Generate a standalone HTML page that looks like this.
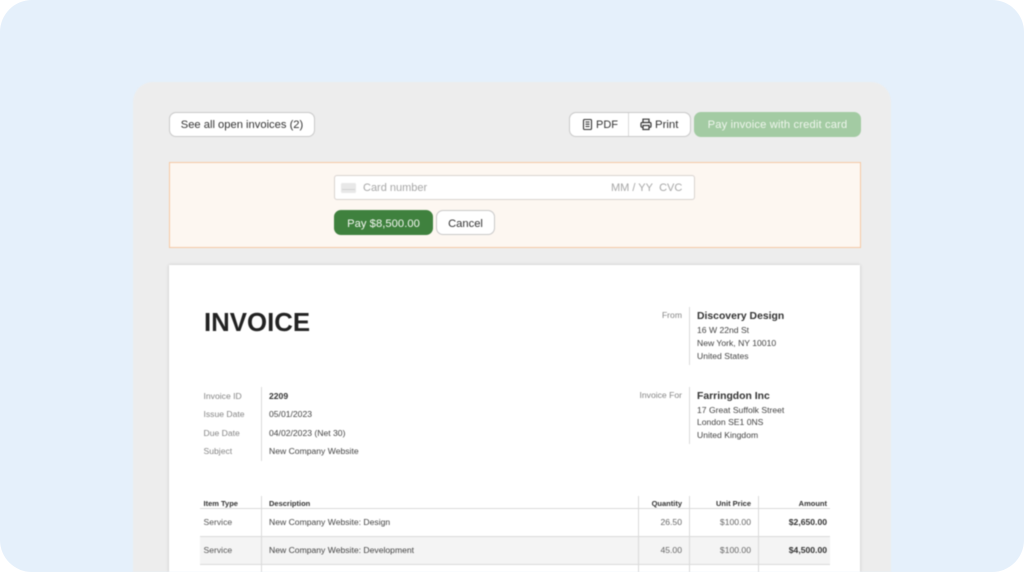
<!DOCTYPE html>
<html><head><meta charset="utf-8">
<style>
html,body{margin:0;padding:0;background:#fff;width:1024px;height:572px;overflow:hidden}
*{box-sizing:border-box}
body{font-family:"Liberation Sans",sans-serif;position:relative}
#bg{position:absolute;left:0;top:0;width:1024px;height:572px;background:#e5f0fb;border-radius:32px;overflow:hidden}
#wrap{position:absolute;left:0;top:0;width:1024px;height:572px;overflow:hidden;filter:blur(.45px)}
.a{position:absolute;white-space:nowrap}
.btn{position:absolute;background:#fff;border:1px solid #c9c9c9;border-radius:7px;color:#333;font-size:11.2px;display:flex;align-items:center;justify-content:center;padding-top:1px}
.lab{font-size:8.6px;color:#858585}
.val{font-size:8.6px;color:#444}
.v{position:absolute;width:1px;background:#dadada}
.h{position:absolute;height:1px;background:#dadada}
.th{font-size:7.5px;font-weight:bold;color:#333}
.r{text-align:right}
</style></head>
<body>
<div id="bg">
<div id="wrap">
<div class="a" style="left:133px;top:82px;width:758px;height:490px;background:#ededed;border-radius:20px 20px 0 0"></div>

<div class="btn" style="left:169px;top:112px;width:146px;height:25px">See all open invoices (2)</div>

<div class="a" style="left:569px;top:112px;width:122px;height:25px;background:#fff;border:1px solid #c9c9c9;border-radius:7px"></div>
<div class="v" style="left:628px;top:113px;height:23px"></div>
<svg class="a" style="left:582px;top:119px" width="11" height="11" viewBox="0 0 11 11" fill="none" stroke="#333" stroke-width="1.1"><rect x="1.5" y="0.5" width="8" height="10" rx="1"/><path d="M3.5 3h4M3.5 5.2h4M3.5 7.5h4"/></svg>
<div class="a" style="left:596px;top:119px;font-size:11px;color:#333">PDF</div>
<svg class="a" style="left:640px;top:118px" width="12" height="13" viewBox="0 0 12 13" fill="none" stroke="#333" stroke-width="1.2"><path d="M3 4.5V1.2h6v3.3"/><rect x="1" y="4.5" width="10" height="4.8" rx="1.2"/><rect x="3" y="7.5" width="6" height="4" fill="#fff"/></svg>
<div class="a" style="left:655px;top:119px;font-size:11.4px;color:#333">Print</div>

<div class="btn" style="left:694px;top:112px;width:167px;height:25px;background:#a3cba3;border-color:#a3cba3;color:#eff6ed;letter-spacing:.15px">Pay invoice with credit card</div>

<div class="a" style="left:169px;top:162px;width:692px;height:86px;background:#fdf7f1;border:1.5px solid #f5c8a4"></div>
<div class="a" style="left:334px;top:175px;width:361px;height:25px;background:#fff;border:1px solid #d8d3cf;border-radius:3px"></div>
<div class="a" style="left:341px;top:183px;width:15px;height:10px;background:#e8e8e8;border-radius:1.5px"></div>
<div class="a" style="left:342px;top:189px;width:13px;height:1px;background:#d2d2d2"></div>
<div class="a" style="left:363px;top:182px;font-size:11px;color:#a6a6a6">Card number</div>
<div class="a" style="left:611px;top:182px;font-size:11px;color:#a6a6a6">MM / YY&nbsp; CVC</div>

<div class="btn" style="left:334px;top:210px;width:99px;height:25px;background:#3f813e;border-color:#3f813e;color:#f4f8f2;padding-top:2px;letter-spacing:.05px">Pay $8,500.00</div>
<div class="btn" style="left:436px;top:210px;width:59px;height:25px;padding-top:2px">Cancel</div>

<div class="a" style="left:169px;top:265px;width:691px;height:307px;background:#fff;box-shadow:0 0 3px #c0c0c0"></div>

<div class="a" style="left:204px;top:308px;font-size:25.8px;font-weight:bold;color:#222;line-height:30px">INVOICE</div>

<div class="a lab r" style="left:620px;width:62px;top:310px">From</div>
<div class="v" style="left:689px;top:307px;height:58px"></div>
<div class="a" style="left:697px;top:311px;font-size:10.4px;font-weight:bold;color:#333">Discovery Design</div>
<div class="a val" style="left:697px;top:325px">16 W 22nd St</div>
<div class="a val" style="left:697px;top:338px">New York, NY 10010</div>
<div class="a val" style="left:697px;top:351px">United States</div>

<div class="a lab r" style="left:620px;width:62px;top:390px">Invoice For</div>
<div class="v" style="left:689px;top:387px;height:57px"></div>
<div class="a" style="left:697px;top:391px;font-size:10.4px;font-weight:bold;color:#333">Farringdon Inc</div>
<div class="a val" style="left:697px;top:405px">17 Great Suffolk Street</div>
<div class="a val" style="left:697px;top:417px">London SE1 0NS</div>
<div class="a val" style="left:697px;top:430px">United Kingdom</div>

<div class="v" style="left:261px;top:387px;height:74px"></div>
<div class="a lab" style="left:203.5px;top:391px">Invoice ID</div>
<div class="a val" style="left:269px;top:391px;font-weight:bold;color:#333">2209</div>
<div class="a lab" style="left:203.5px;top:409px">Issue Date</div>
<div class="a val" style="left:269px;top:409px">05/01/2023</div>
<div class="a lab" style="left:203.5px;top:428px">Due Date</div>
<div class="a val" style="left:269px;top:428px">04/02/2023 (Net 30)</div>
<div class="a lab" style="left:203.5px;top:446px">Subject</div>
<div class="a val" style="left:269px;top:446px">New Company Website</div>

<div class="a" style="left:200px;top:536px;width:630px;height:28px;background:#f4f4f4"></div>
<div class="h" style="left:200px;top:508px;width:630px"></div>
<div class="h" style="left:200px;top:536px;width:630px"></div>
<div class="h" style="left:200px;top:564px;width:630px"></div>
<div class="v" style="left:261px;top:496px;height:76px"></div>
<div class="v" style="left:638px;top:496px;height:76px"></div>
<div class="v" style="left:689px;top:496px;height:76px"></div>
<div class="v" style="left:758px;top:496px;height:76px"></div>

<div class="a th" style="left:203.5px;top:498.5px">Item Type</div>
<div class="a th" style="left:269px;top:498.5px">Description</div>
<div class="a th r" style="left:620px;width:62px;top:498.5px">Quantity</div>
<div class="a th r" style="left:690px;width:61px;top:498.5px">Unit Price</div>
<div class="a th r" style="left:760px;width:67px;top:498.5px">Amount</div>

<div class="a lab" style="left:203.5px;top:517px;color:#555">Service</div>
<div class="a val" style="left:269px;top:517px">New Company Website: Design</div>
<div class="a val r" style="left:620px;width:62px;top:517px;color:#666">26.50</div>
<div class="a val r" style="left:690px;width:61px;top:517px;color:#666">$100.00</div>
<div class="a val r" style="left:760px;width:67px;top:517px;font-weight:bold;color:#333">$2,650.00</div>

<div class="a lab" style="left:203.5px;top:545px;color:#555">Service</div>
<div class="a val" style="left:269px;top:545px">New Company Website: Development</div>
<div class="a val r" style="left:620px;width:62px;top:545px;color:#666">45.00</div>
<div class="a val r" style="left:690px;width:61px;top:545px;color:#666">$100.00</div>
<div class="a val r" style="left:760px;width:67px;top:545px;font-weight:bold;color:#333">$4,500.00</div>
</div>
</div>
</body></html>
